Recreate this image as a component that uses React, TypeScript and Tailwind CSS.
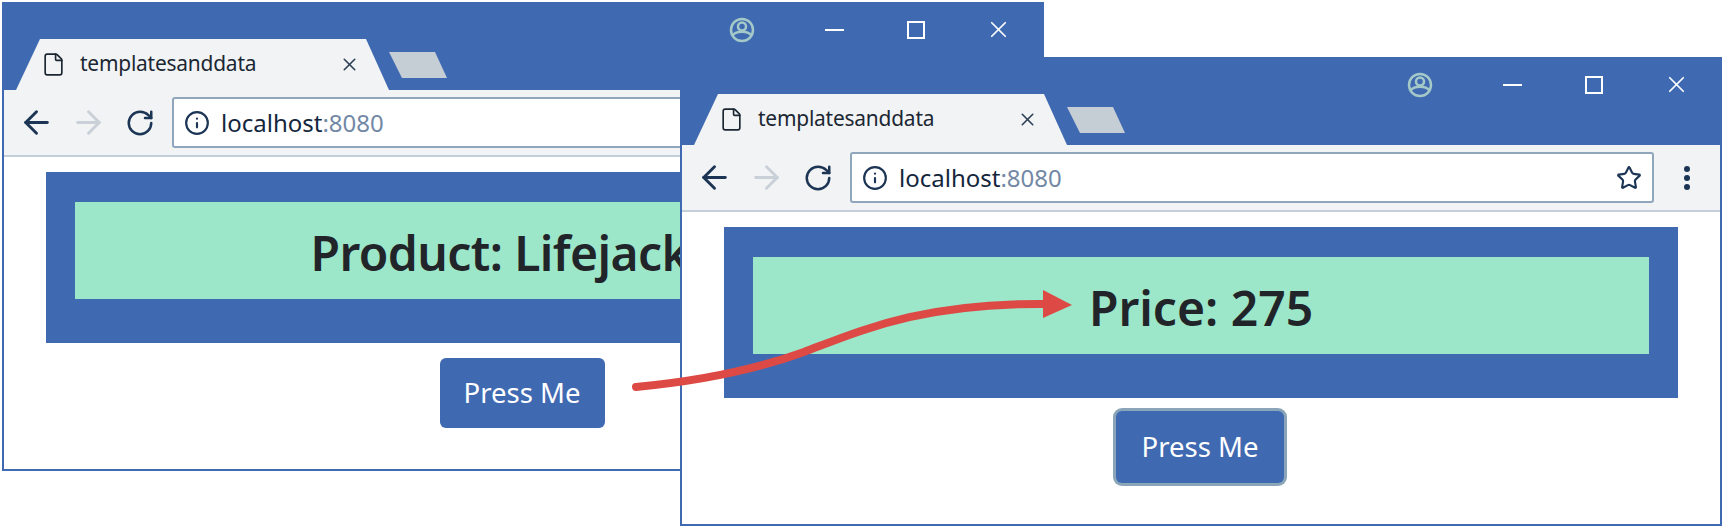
import React from 'react';
import { ArrowLeft, ArrowRight, RotateCw, Info, File, X, Star } from 'lucide-react';

const fontStack = "font-['Noto_Sans',sans-serif]";

const AvatarIcon = () => (
  <svg width="26" height="26" viewBox="0 0 26 26" fill="none">
    <circle cx="13" cy="13" r="11" stroke="#a4c9c8" strokeWidth="2.5" />
    <circle cx="13" cy="9.5" r="4" stroke="#a4c9c8" strokeWidth="2.5" />
    <path d="M4 18c3-4.500 15-4.500 18 0" stroke="#a4c9c8" strokeWidth="2.5" />
  </svg>
);

const Window: React.FC<{ className: string; children: React.ReactNode }> = ({ className, children }) => (
  <div className={`absolute w-[1042px] h-[469px] flex flex-col bg-white border-2 border-[#3f6ab1] ${className}`}>
    {/* Title bar */}
    <div className="h-[86px] shrink-0 flex items-start bg-[#3f6ab1] bg-[radial-gradient(#8ea6c4_0.5px,transparent_0.7px)] bg-[length:4px_4px]">
      <div className="mt-[35px] ml-[12px] w-[373px] h-[51px] bg-[#f1f3f4] [clip-path:polygon(0_100%,24px_0,350px_0,100%_100%)] flex items-center pl-[25px] pr-[28px] text-[#1c2733]">
        <File size={25} strokeWidth={1.6} />
        <span className="ml-[14px] mb-[2px] text-[20.9px] tracking-[-0.2px]">templatesanddata</span>
        <X size={21} strokeWidth={1.8} className="ml-auto mr-[1px] text-[#2c3e55]" />
      </div>
      <div className="mt-[48px] w-[58px] h-[26px] bg-[#c5cdd5] [clip-path:polygon(0_0,46px_0,100%_100%,13px_100%)]" />
      <div className="ml-auto flex items-center mt-[12px] mr-[3px] text-white">
        <div className="w-[26px] flex justify-center mr-[38px]">
          <AvatarIcon />
        </div>
        <div className="w-[82px] flex justify-center">
          <div className="w-[19px] h-[2px] bg-white" />
        </div>
        <div className="w-[82px] flex justify-center">
          <div className="w-[18px] h-[18px] border-2 border-white" />
        </div>
        <div className="w-[82px] flex justify-center">
          <X size={27} strokeWidth={1.5} />
        </div>
      </div>
    </div>

    {/* Toolbar */}
    <div className="h-[67px] shrink-0 bg-[#f1f3f4] border-b-2 border-[#c4ced8] flex items-center text-[#1c3555]">
      <ArrowLeft size={37} strokeWidth={1.9} className="ml-[14px]" />
      <ArrowRight size={37} strokeWidth={1.9} className="ml-[15px] text-[#c9d0d8]" />
      <RotateCw size={30} strokeWidth={2} className="ml-[18px]" />
      <div className="ml-[17px] w-[804px] h-[51px] shrink-0 flex items-center bg-white border-2 border-[#8fa6bd] rounded-[3px] pl-[10px] pr-[10px]">
        <Info size={26} strokeWidth={2} />
        <span className="ml-[11px] text-[24px] text-[#14263c]">
          localhost<span className="text-[#7388a5]">:8080</span>
        </span>
        <Star size={26} strokeWidth={2} className="ml-auto" />
      </div>
      <div className="ml-[30px] flex flex-col gap-[3px]">
        <span className="w-[6px] h-[6px] rounded-full bg-[#1c3555]" />
        <span className="w-[6px] h-[6px] rounded-full bg-[#1c3555]" />
        <span className="w-[6px] h-[6px] rounded-full bg-[#1c3555]" />
      </div>
    </div>

    {/* Page */}
    <div className="flex-1 flex flex-col items-center pt-[15px] pl-[42px] pr-[42px]">
      {children}
    </div>
  </div>
);

const Banner: React.FC<{ text: string; className?: string }> = ({ text, className = '' }) => (
  <div className="w-full h-[171px] bg-[#3f6ab1] pt-[30px] px-[29px]">
    <div className={`h-[97px] bg-[#9ce6c9] flex items-center justify-center pt-[5px] text-[48px] font-semibold text-[#212529] whitespace-nowrap ${className}`}>
      {text}
    </div>
  </div>
);

export default function App() {
  return (
    <div className={`relative w-[1725px] h-[530px] bg-white overflow-hidden ${fontStack}`}>
      <Window className="left-[2px] top-[2px]">
        <Banner text="Product: Lifejacket" className="tracking-[-0.6px]" />
        <button className="mt-[15px] -ml-[2px] w-[165px] h-[70px] rounded-md bg-[#3f6ab1] text-white text-[27.5px]">
          Press Me
        </button>
      </Window>

      <Window className="left-[680px] top-[57px]">
        <Banner text="Price: 275" />
        <button className="mt-[13px] -ml-[2px] w-[168px] h-[72px] rounded-md bg-[#3f6ab1] text-white text-[27.5px] ring-[3px] ring-[#8aa5b8]">
          Press Me
        </button>
      </Window>

      {/* Arrow between the two windows */}
      <svg className="absolute left-0 top-0 pointer-events-none" width="1725" height="530" viewBox="0 0 1725 530" fill="none">
        <path
          d="M636 387C700 381 760 368 804 352C860 331 920 303 1046 304"
          stroke="#dd4a46"
          strokeWidth="8"
          strokeLinecap="round"
        />
        <path d="M1043 290L1072 305L1043 318Z" fill="#dd4a46" />
      </svg>
    </div>
  );
}
